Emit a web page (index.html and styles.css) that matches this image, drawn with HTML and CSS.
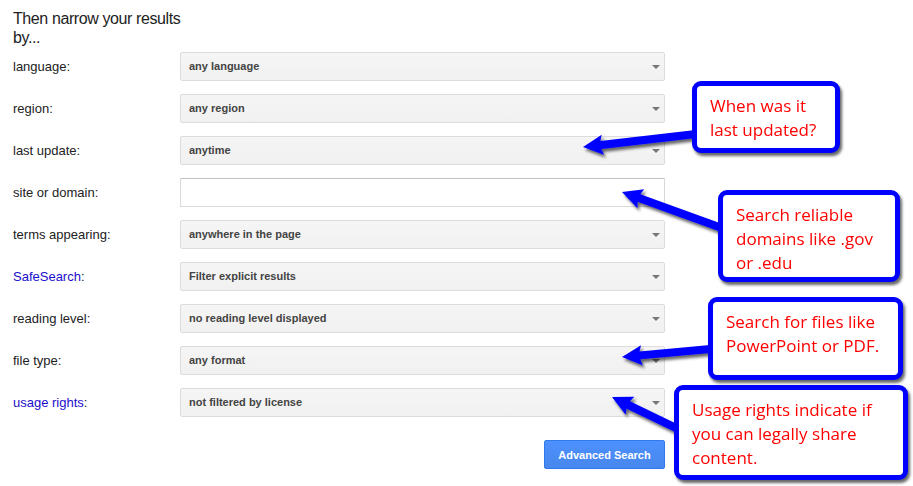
FILE: index.html
```html
<!DOCTYPE html>
<html lang="en">
<head>
  <meta charset="UTF-8" />
  <title>Advanced Search</title>
  <link rel="stylesheet" href="styles.css">
</head>
<body>
  <div class="page">
    <h2 class="intro">Then narrow your results by...</h2>

    <div class="form">
      <label class="lbl">language:</label>
      <div class="field"><select><option>any language</option></select></div>

      <label class="lbl">region:</label>
      <div class="field"><select><option>any region</option></select></div>

      <label class="lbl">last update:</label>
      <div class="field"><select><option>anytime</option></select></div>

      <label class="lbl">site or domain:</label>
      <input class="text" type="text">

      <label class="lbl">terms appearing:</label>
      <div class="field"><select><option>anywhere in the page</option></select></div>

      <label class="lbl"><a href="#">SafeSearch</a>:</label>
      <div class="field"><select><option>Filter explicit results</option></select></div>

      <label class="lbl">reading level:</label>
      <div class="field"><select><option>no reading level displayed</option></select></div>

      <label class="lbl">file type:</label>
      <div class="field"><select><option>any format</option></select></div>

      <label class="lbl"><a href="#">usage rights</a>:</label>
      <div class="field"><select><option>not filtered by license</option></select></div>
    </div>

    <div class="actions">
      <button class="btn">Advanced Search</button>
    </div>
  </div>

  <!-- annotation arrows -->
  <svg class="arrows" width="913" height="486" viewBox="0 0 913 486">
    <defs>
      <filter id="sh" x="-20%" y="-50%" width="140%" height="200%">
        <feDropShadow dx="2" dy="3" stdDeviation="1.5" flood-color="#000" flood-opacity="0.6"/>
      </filter>
    </defs>
    <g fill="#0000ff" filter="url(#sh)">
      <polygon transform="translate(583 147) rotate(-6.6)" points="0,0 20,-10 18,-4 118,-4 118,4 18,4 20,10"/>
      <polygon transform="translate(622 192) rotate(19.8)" points="0,0 20,-10 18,-4 112,-4 112,4 18,4 20,10"/>
      <polygon transform="translate(622 357) rotate(-5.2)" points="0,0 20,-10 18,-4 94,-4 94,4 18,4 20,10"/>
      <polygon transform="translate(612 397) rotate(25.8)" points="0,0 20,-10 18,-4 76,-4 76,4 18,4 20,10"/>
    </g>
  </svg>

  <div class="callout c1">When was it last updated?</div>
  <div class="callout c2">Search reliable domains like .gov or .edu</div>
  <div class="callout c3">Search for files like PowerPoint or PDF.</div>
  <div class="callout c4">Usage rights indicate if you can legally share content.</div>
</body>
</html>
```

FILE: styles.css
```css
body {
  margin: 0;
  font-family: Arial, "Liberation Sans", sans-serif;
  color: #222;
  background: #fff;
}
.page {
  padding: 9px 0 0 13px;
  width: 652px;
}
.intro {
  margin: 0 0 5px 0;
  width: 180px;
  font-size: 16px;
  font-weight: normal;
  line-height: 19px;
  letter-spacing: -0.4px;
  color: #222;
}
.form {
  display: grid;
  grid-template-columns: 167px 485px;
  grid-auto-rows: 29px;
  row-gap: 13px;
  align-items: center;
}
.lbl {
  font-size: 13px;
  color: #222;
}
.lbl a {
  color: #1a0dcc;
  text-decoration: none;
}
.field {
  position: relative;
  height: 29px;
}
.field select {
  appearance: none;
  -webkit-appearance: none;
  box-sizing: border-box;
  width: 100%;
  height: 29px;
  margin: 0;
  padding: 0 0 1px 8px;
  border: 1px solid #dcdcdc;
  border-radius: 2px;
  background: linear-gradient(#f5f5f5, #f1f1f1);
  font-family: Arial, "Liberation Sans", sans-serif;
  font-size: 11px;
  font-weight: bold;
  color: #444;
  outline: none;
}
.field::after {
  content: "";
  position: absolute;
  right: 5px;
  top: 13px;
  border-left: 4px solid transparent;
  border-right: 4px solid transparent;
  border-top: 4px solid #777;
}
.text {
  box-sizing: border-box;
  width: 100%;
  height: 29px;
  margin: 0;
  border: 1px solid #d9d9d9;
  border-top-color: #c0c0c0;
  border-radius: 1px;
  background: #fff;
}
.actions {
  display: flex;
  justify-content: flex-end;
  margin-top: 23px;
}
.btn {
  box-sizing: border-box;
  width: 121px;
  height: 29px;
  border: 1px solid #3079ed;
  border-radius: 2px;
  background: linear-gradient(#4d90fe, #4787ed);
  color: #fff;
  font-family: Arial, "Liberation Sans", sans-serif;
  font-size: 11px;
  font-weight: bold;
}
.arrows {
  position: absolute;
  left: 0;
  top: 0;
  pointer-events: none;
}
.callout {
  position: absolute;
  box-sizing: border-box;
  padding: 8px 13px 0;
  border: 5px solid #0000ff;
  border-radius: 9px;
  background: #fff;
  box-shadow: 2px 3px 3px rgba(0, 0, 0, 0.6);
  font-family: "Open Sans", sans-serif;
  font-size: 17px;
  line-height: 24px;
  color: #ff0000;
}
.c1 { left: 692px; top: 81px;  width: 148px; height: 72px; }
.c2 { left: 718px; top: 190px; width: 182px; height: 92px; }
.c3 { left: 708px; top: 297px; width: 195px; height: 83px; }
.c4 { left: 674px; top: 385px; width: 234px; height: 95px; }
```
